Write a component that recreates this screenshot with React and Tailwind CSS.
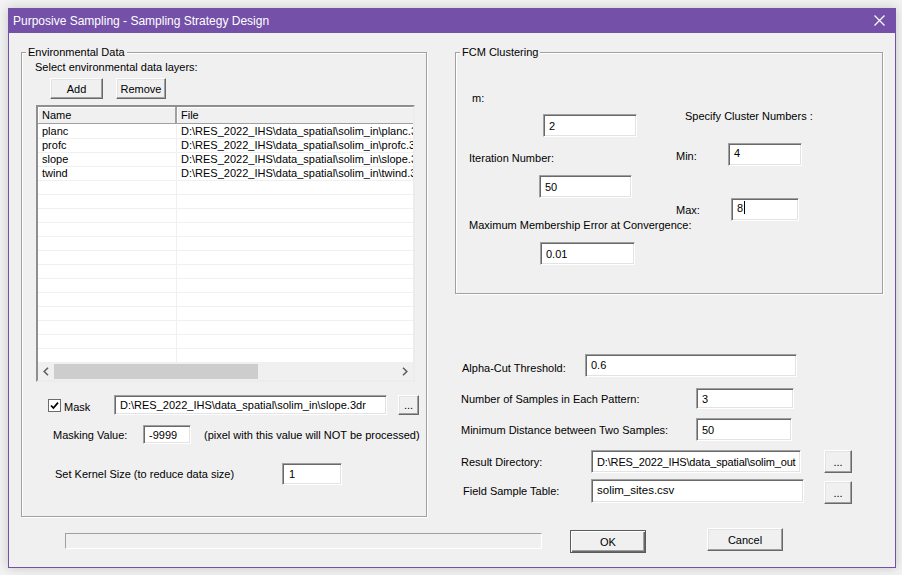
import React from "react";

function Field({ className = "", children }) {
  return (
    <div
      className={`flex items-center pl-[5px] bg-white border border-t-[#a0a0a0] border-l-[#a0a0a0] border-r-white border-b-white shadow-[inset_1px_1px_0_#696969,inset_-1px_-1px_0_#e3e3e3] whitespace-nowrap overflow-hidden shrink-0 ${className}`}
    >
      {children}
    </div>
  );
}

function Btn({ className = "", children }) {
  return (
    <div
      className={`flex items-center justify-center bg-[#f0f0f0] border border-t-white border-l-white border-r-[#696969] border-b-[#696969] shadow-[inset_-1px_-1px_0_#a0a0a0,inset_1px_1px_0_#e3e3e3] shrink-0 ${className}`}
    >
      {children}
    </div>
  );
}

function Group({ className = "", title, children }) {
  return (
    <div
      className={`flex flex-col border border-[#a0a0a0] shadow-[1px_1px_0_#fff,inset_1px_1px_0_#fff] shrink-0 ${className}`}
    >
      <div className="-mt-[8px] ml-[4px] px-[2px] bg-[#f0f0f0] w-fit h-[14px] leading-[14px]">
        {title}
      </div>
      {children}
    </div>
  );
}

const rows = [
  ["planc", "D:\\RES_2022_IHS\\data_spatial\\solim_in\\planc.3dr"],
  ["profc", "D:\\RES_2022_IHS\\data_spatial\\solim_in\\profc.3dr"],
  ["slope", "D:\\RES_2022_IHS\\data_spatial\\solim_in\\slope.3dr"],
  ["twind", "D:\\RES_2022_IHS\\data_spatial\\solim_in\\twind.3dr"],
];
const allRows = [...rows, ...Array.from({ length: 13 }, () => ["", ""])];

export default function App() {
  return (
    <div className="w-[902px] h-[575px] bg-[#f2f2f2] pt-[8px] pl-[8px] font-['Liberation_Sans',Arial,sans-serif] text-[11px] leading-[14px] text-black overflow-hidden">
      <div className="w-[888px] h-[560px] flex flex-col border-x border-b border-[#7450a8] shadow-[0_0_10px_rgba(0,0,0,0.18)]">
        {/* Title bar */}
        <div className="h-[25px] bg-[#7450a8] flex items-center justify-between pl-[4px] pr-[10px] text-white text-[12px] shrink-0">
          <span>Purposive Sampling - Sampling Strategy Design</span>
          <svg width="11" height="11" viewBox="0 0 11 11">
            <path d="M0.5 0.5 L10.5 10.5 M10.5 0.5 L0.5 10.5" stroke="#fff" strokeWidth="1.2" />
          </svg>
        </div>

        {/* Body */}
        <div className="flex-1 bg-[#f0f0f0] flex flex-col">
          <div className="flex h-[484px]">
            {/* Left group */}
            <Group title="Environmental Data" className="ml-[12px] mt-[19px] w-[406px] h-[465px]">
              <div className="mt-[1px] ml-[13px] h-[14px]">Select environmental data layers:</div>
              <div className="mt-[4px] ml-[28px] flex gap-[13px]">
                <Btn className="w-[53px] h-[21px]">Add</Btn>
                <Btn className="w-[50px] h-[21px]">Remove</Btn>
              </div>

              {/* List view */}
              <div className="mt-[6px] ml-[14px] w-[379px] h-[277px] bg-white border-2 border-t-[#8f8f8f] border-l-[#8f8f8f] border-r-[#ececec] border-b-[#ececec] flex flex-col overflow-hidden">
                <div className="h-[17px] flex bg-[#f0f0f0] border-b border-[#a0a0a0] shrink-0">
                  <div className="w-[139px] pl-[4px] flex items-center border-r-2 border-r-[#a0a0a0] shadow-[inset_1px_1px_0_#fff]">
                    Name
                  </div>
                  <div className="flex-1 pl-[4px] flex items-center shadow-[inset_1px_1px_0_#fff]">File</div>
                </div>
                <div className="flex-1 mt-[1px] overflow-hidden flex flex-col">
                  {allRows.map((r, i) => (
                    <div key={i} className="h-[14px] flex border-b border-[#f0f0f0] shrink-0 leading-[13px]">
                      <div className="w-[139px] pl-[4px] border-r border-[#f0f0f0] whitespace-nowrap overflow-hidden shrink-0">
                        {r[0]}
                      </div>
                      <div className="flex-1 min-w-0 pl-[4px] whitespace-nowrap overflow-hidden">{r[1]}</div>
                    </div>
                  ))}
                </div>
                <div className="h-[17px] flex items-center bg-[#f0f0f0] shrink-0">
                  <div className="w-[16px] h-[17px] flex items-center justify-center">
                    <svg width="6" height="9" viewBox="0 0 6 9">
                      <path d="M5 0.8 L1.2 4.5 L5 8.2" fill="none" stroke="#606060" strokeWidth="1.6" />
                    </svg>
                  </div>
                  <div className="w-[204px] h-[15px] bg-[#cdcdcd]" />
                  <div className="flex-1" />
                  <div className="w-[17px] h-[17px] flex items-center justify-center">
                    <svg width="6" height="9" viewBox="0 0 6 9">
                      <path d="M1 0.8 L4.8 4.5 L1 8.2" fill="none" stroke="#606060" strokeWidth="1.6" />
                    </svg>
                  </div>
                </div>
              </div>

              {/* Mask row */}
              <div className="mt-[13px] ml-[26px] h-[20px] flex items-center">
                <div className="w-[13px] h-[13px] bg-white border border-[#6b6b6b] flex items-center justify-center shrink-0">
                  <svg width="9" height="9" viewBox="0 0 9 9">
                    <path d="M1 4.5 L3.4 7 L8 1.6" fill="none" stroke="#000" strokeWidth="1.7" />
                  </svg>
                </div>
                <span className="w-[53px] pl-[3px] pt-[3px] shrink-0">Mask</span>
                <Field className="w-[273px] h-[20px]">
                  D:\RES_2022_IHS\data_spatial\solim_in\slope.3dr
                </Field>
                <Btn className="ml-[11px] w-[21px] h-[20px] items-end pb-[2px]">...</Btn>
              </div>

              {/* Masking value */}
              <div className="mt-[10px] ml-[31px] h-[19px] flex items-center">
                <span className="w-[90px] shrink-0">Masking Value:</span>
                <Field className="w-[48px] h-[19px]">-9999</Field>
                <span className="ml-[13px] whitespace-nowrap">(pixel with this value will NOT be processed)</span>
              </div>

              {/* Kernel */}
              <div className="mt-[19px] ml-[33px] h-[22px] flex items-center">
                <span className="w-[227px] shrink-0">Set Kernel Size (to reduce data size)</span>
                <Field className="w-[60px] h-[22px] pl-[6px]">1</Field>
              </div>
            </Group>

            {/* Right column */}
            <div className="ml-[28px] w-[428px] flex flex-col">
              <Group title="FCM Clustering" className="mt-[19px] w-[428px] h-[242px]">
                <div className="flex">
                  <div className="w-[220px] flex flex-col shrink-0">
                    <div className="mt-[32px] ml-[16px] h-[14px]">m:</div>
                    <Field className="mt-[9px] ml-[87px] w-[94px] h-[23px]">2</Field>
                    <div className="mt-[14px] ml-[13px] h-[14px]">Iteration Number:</div>
                    <Field className="mt-[10px] ml-[83px] w-[93px] h-[23px]">50</Field>
                    <div className="mt-[20px] ml-[13px] h-[14px] whitespace-nowrap">
                      Maximum Membership Error at Convergence:
                    </div>
                    <Field className="mt-[10px] ml-[84px] w-[95px] h-[23px]">0.01</Field>
                  </div>
                  <div className="flex flex-col">
                    <div className="mt-[50px] ml-[9px] h-[14px] whitespace-nowrap">Specify Cluster Numbers :</div>
                    <div className="mt-[20px] h-[23px] flex items-center">
                      <span className="w-[52px] pt-[3px] shrink-0">Min:</span>
                      <Field className="w-[74px] h-[23px] items-start pt-[2px]">4</Field>
                    </div>
                    <div className="mt-[32px] h-[23px] flex items-center">
                      <span className="w-[55px] pt-[1px] shrink-0">Max:</span>
                      <Field className="w-[68px] h-[23px] items-start pt-[2px]">
                        8<span className="inline-block w-px h-[13px] bg-black ml-px" />
                      </Field>
                    </div>
                  </div>
                </div>
              </Group>

              <div className="mt-[60px] h-[23px] flex items-center">
                <span className="ml-[7px] w-[123px] pt-[4px] shrink-0">Alpha-Cut Threshold:</span>
                <Field className="w-[212px] h-[23px] items-start pt-[3px]">0.6</Field>
              </div>
              <div className="mt-[11px] h-[21px] flex items-center">
                <span className="ml-[6px] w-[235px] pt-[1px] shrink-0">Number of Samples in Each Pattern:</span>
                <Field className="w-[98px] h-[21px]">3</Field>
              </div>
              <div className="mt-[9px] h-[23px] flex items-center">
                <span className="ml-[6px] w-[235px] shrink-0">Minimum Distance between Two Samples:</span>
                <Field className="w-[96px] h-[23px]">50</Field>
              </div>
              <div className="mt-[9px] h-[23px] flex items-center">
                <span className="ml-[6px] w-[130px] pt-[1px] shrink-0">Result Directory:</span>
                <Field className="w-[210px] h-[23px] pl-[4px] tracking-[-0.15px]">D:\RES_2022_IHS\data_spatial\solim_out</Field>
                <Btn className="ml-[23px] w-[28px] h-[23px] items-end pb-[3px]">...</Btn>
              </div>
              <div className="mt-[6px] h-[25px] flex items-start">
                <span className="ml-[8px] w-[128px] pt-[5px] shrink-0">Field Sample Table:</span>
                <Field className="w-[213px] h-[24px] items-start pt-[3px] text-[11.5px]">solim_sites.csv</Field>
                <Btn className="ml-[20px] mt-[2px] w-[28px] h-[23px] items-end pb-[3px]">...</Btn>
              </div>
            </div>
          </div>

          {/* Bottom row */}
          <div className="mt-[11px] flex items-start">
            <div className="ml-[56px] mt-[5px] w-[477px] h-[16px] border border-t-[#a0a0a0] border-l-[#a0a0a0] border-r-white border-b-white bg-[#f0f0f0]" />
            <div className="ml-[28px] mt-[2px] w-[76px] h-[23px] flex items-center justify-center bg-[#f0f0f0] border border-[#5a5a5a] shadow-[inset_1px_1px_0_#fff,inset_-1px_-1px_0_#696969,inset_-2px_-2px_0_#a0a0a0]">
              OK
            </div>
            <Btn className="ml-[61px] w-[76px] h-[23px]">Cancel</Btn>
          </div>
        </div>
      </div>
    </div>
  );
}
